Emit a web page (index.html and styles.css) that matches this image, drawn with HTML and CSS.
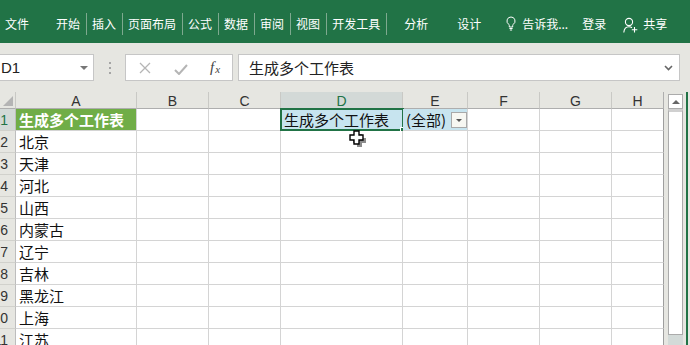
FILE: index.html
```html
<!DOCTYPE html>
<html lang="zh-CN">
<head>
<meta charset="utf-8">
<title>Excel</title>
<link rel="stylesheet" href="styles.css">
</head>
<body>
<div class="ribbon">
  <span class="tab file">文件</span>
  <span class="tab first">开始</span><i class="sep"></i>
  <span class="tab">插入</span><i class="sep"></i>
  <span class="tab">页面布局</span><i class="sep"></i>
  <span class="tab">公式</span><i class="sep"></i>
  <span class="tab">数据</span><i class="sep"></i>
  <span class="tab">审阅</span><i class="sep"></i>
  <span class="tab">视图</span><i class="sep"></i>
  <span class="tab">开发工具</span><i class="sep"></i>
  <span class="tab analyze">分析</span>
  <span class="tab design">设计</span>
  <svg class="bulb" width="10" height="15" viewBox="0 0 10 15"><path d="M5 1a4 4 0 0 0-2.3 7.3c.4.3.6.8.6 1.3V11h3.4V9.6c0-.5.2-1 .6-1.3A4 4 0 0 0 5 1z" fill="none" stroke="#fff" stroke-width="1"/><path d="M3.4 12.5h3.2M3.9 14h2.2" stroke="#fff" stroke-width="1"/></svg>
  <span class="tab tell">告诉我...</span>
  <span class="tab login">登录</span>
  <svg class="person" width="15" height="16" viewBox="0 0 15 16"><circle cx="6" cy="5" r="3.6" fill="none" stroke="#fff" stroke-width="1.1"/><path d="M0.8 15.5c.3-3.6 2.4-5.8 5.2-5.8 1.2 0 2.2.4 3 1" fill="none" stroke="#fff" stroke-width="1.1"/><path d="M11.5 10v5.5M8.8 12.8h5.5" stroke="#fff" stroke-width="1.1"/></svg>
  <span class="tab share">共享</span>
</div>

<div class="fbar">
  <div class="namebox"><span>D1</span><i class="tri"></i></div>
  <div class="dots"><i></i><i></i><i></i></div>
  <div class="fxbox">
    <svg class="ic-x" width="12" height="12" viewBox="0 0 12 12"><path d="M1 1l10 10M11 1L1 11" stroke="#b5b5b5" stroke-width="1.3"/></svg>
    <svg class="ic-ok" width="14" height="11" viewBox="0 0 14 11"><path d="M1 6l4 4 8-9" fill="none" stroke="#b5b5b5" stroke-width="2"/></svg>
    <span class="ic-fx"><i>f</i><i class="sx">x</i></span>
  </div>
  <div class="finput"><span>生成多个工作表</span><svg class="chev" width="9" height="6" viewBox="0 0 9 6"><path d="M1 1l3.5 3.5L8 1" fill="none" stroke="#666" stroke-width="1.6"/></svg></div>
</div>

<div class="sheet">
  <div class="gridwrap">
    <div class="grid">
      <div class="hd corner"><i></i></div>
      <div class="hd">A</div><div class="hd">B</div><div class="hd">C</div><div class="hd sel">D</div><div class="hd">E</div><div class="hd">F</div><div class="hd">G</div><div class="hd last">H</div>

      <div class="rh sel"><span>1</span></div>
      <div class="c green">生成多个工作表</div><div class="c"></div><div class="c"></div>
      <div class="c blue active">生成多个工作表<i class="selbox"></i><i class="handle"></i></div>
      <div class="c blue">(全部)<i class="filter"></i></div>
      <div class="c"></div><div class="c"></div><div class="c last"></div>

      <div class="rh"><span>2</span></div><div class="c">北京</div><div class="c"></div><div class="c"></div><div class="c"></div><div class="c"></div><div class="c"></div><div class="c"></div><div class="c last"></div>
      <div class="rh"><span>3</span></div><div class="c">天津</div><div class="c"></div><div class="c"></div><div class="c"></div><div class="c"></div><div class="c"></div><div class="c"></div><div class="c last"></div>
      <div class="rh"><span>4</span></div><div class="c">河北</div><div class="c"></div><div class="c"></div><div class="c"></div><div class="c"></div><div class="c"></div><div class="c"></div><div class="c last"></div>
      <div class="rh"><span>5</span></div><div class="c">山西</div><div class="c"></div><div class="c"></div><div class="c"></div><div class="c"></div><div class="c"></div><div class="c"></div><div class="c last"></div>
      <div class="rh"><span>6</span></div><div class="c">内蒙古</div><div class="c"></div><div class="c"></div><div class="c"></div><div class="c"></div><div class="c"></div><div class="c"></div><div class="c last"></div>
      <div class="rh"><span>7</span></div><div class="c">辽宁</div><div class="c"></div><div class="c"></div><div class="c"></div><div class="c"></div><div class="c"></div><div class="c"></div><div class="c last"></div>
      <div class="rh"><span>8</span></div><div class="c">吉林</div><div class="c"></div><div class="c"></div><div class="c"></div><div class="c"></div><div class="c"></div><div class="c"></div><div class="c last"></div>
      <div class="rh"><span>9</span></div><div class="c">黑龙江</div><div class="c"></div><div class="c"></div><div class="c"></div><div class="c"></div><div class="c"></div><div class="c"></div><div class="c last"></div>
      <div class="rh"><span>10</span></div><div class="c">上海</div><div class="c"></div><div class="c"></div><div class="c"></div><div class="c"></div><div class="c"></div><div class="c"></div><div class="c last"></div>
      <div class="rh"><span>11</span></div><div class="c">江苏</div><div class="c"></div><div class="c"></div><div class="c"></div><div class="c"></div><div class="c"></div><div class="c"></div><div class="c last"></div>
    </div>
    <svg class="cursor" width="20" height="18" viewBox="0 0 20 18">
      <path d="M7.5 2.5h5v4h4v5h-4v4h-5v-4h-4v-5h4z" fill="#000" opacity=".45" transform="translate(1.5 1.5)"/>
      <path d="M6 1h5v4h4v5h-4v4H6v-4H2V5h4z" fill="#fff" stroke="#000" stroke-width="1.4"/>
    </svg>
  </div>
  <div class="vscroll">
    <div class="up"><i></i></div>
    <div class="thumb"></div>
    <div class="rest"></div>
  </div>
  <div class="edge"></div>
</div>
</body>
</html>
```

FILE: styles.css
```css
* { box-sizing: border-box; }
html, body { margin: 0; padding: 0; }
body {
  width: 690px;
  height: 345px;
  overflow: hidden;
  background: #e6e6e1;
  font-family: "Noto Sans CJK SC", "Liberation Sans", sans-serif;
}
i { display: block; font-style: normal; }

/* Ribbon */
.ribbon {
  height: 43px;
  background: #217346;
  display: flex;
  align-items: center;
  padding-left: 5px;
  padding-top: 4px;
  color: #fff;
}
.tab { font-size: 12px; line-height: 16px; white-space: nowrap; }
.first { margin-left: 27px; }
.sep { width: 1px; height: 22px; background: #7ea98f; margin: 0 5px 0 6px; }
.analyze { margin-left: 12px; }
.design { margin-left: 29px; }
.bulb { margin-left: 25px; }
.tell { margin-left: 6px; }
.login { margin-left: 14px; }
.person { margin-left: 17px; margin-top: 2px; }
.share { margin-left: 5px; }

/* Formula bar */
.fbar {
  height: 49px;
  display: flex;
  align-items: flex-start;
  padding-top: 11px;
}
.namebox {
  width: 94px;
  height: 27px;
  background: #fff;
  border: 1px solid #c6c6c6;
  border-left: none;
  display: flex;
  align-items: center;
  justify-content: space-between;
  padding: 0 5px 0 1px;
  font-family: "Liberation Sans", sans-serif;
  font-size: 15px;
  color: #222;
}
.tri { width: 0; height: 0; border-left: 4px solid transparent; border-right: 4px solid transparent; border-top: 4px solid #777; }
.dots { width: 31px; height: 27px; display: flex; flex-direction: column; align-items: center; justify-content: center; gap: 3px; }
.dots i { width: 2px; height: 2px; background: #a5a5a5; }
.fxbox {
  width: 108px;
  height: 27px;
  background: #fff;
  border: 1px solid #c6c6c6;
  display: flex;
  align-items: center;
  padding-left: 13px;
}
.ic-ok { margin-left: 23px; margin-top: 3px; }
.ic-fx { margin-left: 22px; display: flex; font-family: "Liberation Serif", serif; font-style: italic; color: #444; font-size: 15px; }
.ic-fx i { font-style: italic; }
.ic-fx .sx { font-size: 11px; margin-top: 4px; margin-left: 1px; }
.finput {
  width: 442px;
  height: 27px;
  margin-left: 5px;
  background: #fff;
  border: 1px solid #c6c6c6;
  display: flex;
  align-items: center;
  justify-content: space-between;
  padding: 0 6px 0 10px;
  font-size: 15px;
  color: #222;
}

/* Sheet */
.sheet { display: flex; height: 253px; }
.gridwrap { position: relative; width: 668px; }
.grid {
  display: grid;
  grid-template-columns: 16px 121px 72px 72px 122px 65px 72px 72px 52px;
  grid-template-rows: 17px;
  grid-auto-rows: 22px;
  width: 664px;
}
.hd {
  background: #e6e6e1;
  border-right: 1px solid #c9c9c5;
  border-bottom: 1px solid #aeaeae;
  font-family: "Liberation Sans", sans-serif;
  font-size: 14px;
  color: #333;
  display: flex;
  align-items: center;
  justify-content: center;
  line-height: 16px;
  padding-top: 1px;
}
.hd.sel { background: #d3d9d7; color: #217346; }
.hd.last { border-right-color: #aeaeae; }
.corner { position: relative; }
.corner i {
  position: absolute; right: 2px; bottom: 2px;
  width: 0; height: 0;
  border-left: 10px solid transparent;
  border-bottom: 10px solid #b4b4b4;
}
.rh {
  background: #e6e6e1;
  border-right: 1px solid #bdbdbd;
  border-bottom: 1px solid #d1d1cc;
  font-family: "Liberation Sans", sans-serif;
  font-size: 14px;
  color: #333;
  display: flex;
  align-items: center;
  justify-content: flex-end;
  padding-right: 7px;
  overflow: hidden;
}
.rh.sel { background: #d3d9d7; color: #217346; }
.c {
  position: relative;
  background: #fff;
  border-right: 1px solid #d4d4d4;
  border-bottom: 1px solid #d4d4d4;
  font-size: 15px;
  line-height: 21px;
  padding-left: 3px;
  color: #111;
  white-space: nowrap;
}
.c.last { border-right-color: #9e9e9e; }
.c.green { background: #70ad47; color: #fff; font-weight: bold; }
.c.blue { background: #c7e4ef; }
.selbox {
  position: absolute;
  left: -1px; top: -1px; right: -2px; bottom: -1px;
  border: 2px solid #217346;
}
.handle {
  position: absolute;
  right: -5px; bottom: -4px;
  width: 7px; height: 7px;
  background: #217346;
  border: 1px solid #fff;
}
.filter {
  position: absolute;
  right: 0; top: 3px;
  width: 16px; height: 16px;
  background: #f7f7f2;
  border: 1px solid #a9a9a9;
}
.filter::after {
  content: "";
  position: absolute;
  left: 4px; top: 6px;
  border-left: 3px solid transparent;
  border-right: 3px solid transparent;
  border-top: 3px solid #555;
}
.cursor { position: absolute; left: 348px; top: 38px; }

/* Vertical scrollbar */
.vscroll { width: 15px; display: flex; flex-direction: column; padding-top: 2px; }
.up {
  height: 15px;
  background: #fff;
  border: 1px solid #ababab;
  display: flex; align-items: center; justify-content: center;
}
.up i { width: 0; height: 0; border-left: 4px solid transparent; border-right: 4px solid transparent; border-bottom: 4px solid #666; }
.thumb { height: 226px; background: #fff; border: 1px solid #ababab; border-top: 3px solid #d0d0d0; }
.rest { flex: 1; background: #d3dad8; }
.edge { width: 5px; border-right: 2px solid #217346; }
```
